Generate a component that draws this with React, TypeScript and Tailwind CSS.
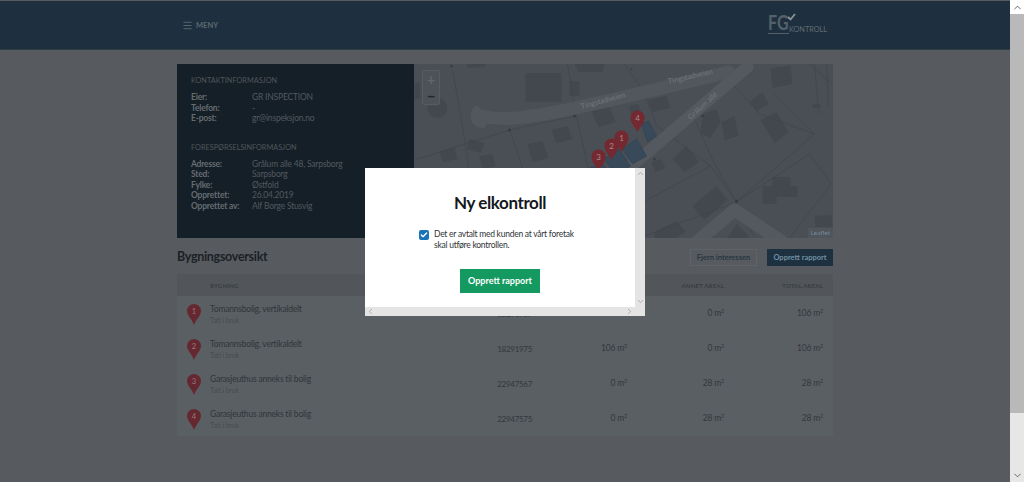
import { Check, ChevronDown, ChevronLeft, ChevronRight, ChevronUp, Menu } from "lucide-react";
import type { ReactNode } from "react";

const contact = [
  ["Eier:", "GR INSPECTION"],
  ["Telefon:", "-"],
  ["E-post:", "gr@inspeksjon.no"],
];

const request = [
  ["Adresse:", "Grålum alle 48, Sarpsborg"],
  ["Sted:", "Sarpsborg"],
  ["Fylke:", "Østfold"],
  ["Opprettet:", "26.04.2019"],
  ["Opprettet av:", "Alf Borge Stusvig"],
];

const rows = [
  { n: 1, name: "Tomannsbolig, vertikaldelt", id: "18291967", bra: "106", other: "0", total: "106" },
  { n: 2, name: "Tomannsbolig, vertikaldelt", id: "18291975", bra: "106", other: "0", total: "106" },
  { n: 3, name: "Garasjeuthus anneks til bolig", id: "22947567", bra: "0", other: "28", total: "28" },
  { n: 4, name: "Garasjeuthus anneks til bolig", id: "22947575", bra: "0", other: "28", total: "28" },
];

const Pin = ({ n, x, y }: { n: number; x: number; y: number }) => (
  <g transform={`translate(${x} ${y})`}>
    <path d="M0 12C-2 7-7 4-7 -2.500A7 7 0 0 1 7 -2.500C7 4 2 7 0 12Z" fill="#74282f" />
    <text x="0" y="0.500" textAnchor="middle" fontSize="8" fill="#a88a8e">{n}</text>
  </g>
);

const buildings = [
  "M111 9L147 9 147 38 111 38z", "M155 17L165 17 165 32 155 32z", "M55 75L70 79 66 89 52 85z", "M25 87L40 84 43 95 28 98z",
  "M113 80L128 77 134 94 118 98z", "M137 66L153 62 158 75 142 79z", "M177 47L195 43 201 58 184 63z", "M65 92L78 90 81 102 68 105z",
  "M233 36L252 32 256 44 238 48z", "M215 42L224 40 226 49 217 51z", "M288 50L302 45 306 58 296 74 286 70z", "M307 58L320 52 324 72 310 76z",
  "M346 56L362 48 374 68 360 79z", "M335 38L348 28 354 40 342 47z", "M356 4L376 2 378 20 358 24z", "M258 95L272 82 285 98 270 108z",
  "M237 98L246 95 251 104 241 108z", "M278 142L302 122 313 136 290 156z", "M348 122L358 122 358 113 376 113 376 122 383 122 383 133 362 133 362 140 348 140z",
  "M400 152L417 151 418 163 401 163z", "M240 168L262 157 271 168 262 174 240 174z", "M313 174L322 160 334 172 333 174z", "M52 0L72 0 70 3 54 4z",
  "M0 20L5 18 6 34 0 36z", "M160 0L190 0 188 8 164 8z", "M398 40L406 40 406 44 398 44z",
];

const MapView = () => (
  <svg viewBox="0 0 418 174" className="block h-full w-full bg-[#494f55]">
    <circle cx="23" cy="44" r="10" fill="#42484e" />
    <g fill="#42484e">
      {buildings.map((d) => (
        <path key={d} d={d} />
      ))}
    </g>
    <g stroke="#3f454b" strokeWidth="0.700" fill="none">
      <path d="M38 6L48 62 58 130" />
      <path d="M0 96L95 66 160 52" />
      <path d="M95 66L110 110M153 0L162 52 175 110" />
      <path d="M210 0L228 26 242 60" />
      <path d="M240 60L296 102 322 138 340 174" />
      <path d="M280 55L300 100 322 138 400 70 360 30" />
      <path d="M322 138L395 90 417 120M225 140L296 102M225 174L322 138" />
      <path d="M300 0L345 50 400 70M395 0L417 20M400 0L404 50M412 0L414 44" />
      <path d="M375 174L417 120" />
    </g>
    <g fill="#363b41">
      <circle cx="37" cy="2" r="1.200" />
      <circle cx="95" cy="66" r="1.500" />
      <circle cx="160" cy="52" r="1.500" />
      <circle cx="217" cy="5" r="1" />
      <circle cx="288" cy="52" r="1.200" />
      <circle cx="322" cy="137" r="1.500" />
      <circle cx="240" cy="95" r="1.200" />
    </g>
    <g fill="none" strokeLinecap="round" strokeLinejoin="round">
      <path d="M66 52C100 60 140 50 314 8" stroke="#51575c" strokeWidth="13" />
      <path d="M62 46C58 52 60 60 68 60" stroke="#51575c" strokeWidth="8" />
      <path d="M333 3L210 108 150 174" stroke="#53595e" strokeWidth="12" />
      <path d="M282 178L320 146 368 178" stroke="#53595e" strokeWidth="13" strokeLinecap="butt" />
    </g>
    <g fill="#72777b" fontSize="7.500">
      <text transform="translate(167 45) rotate(-15)">Tingstadveien</text>
      <text transform="translate(254 20) rotate(-13)">Tingstadveien</text>
      <text transform="translate(276 56) rotate(-42)">Grålum allé</text>
    </g>
    <g fill="#38495a" stroke="#2d3f50" strokeWidth="0.500">
      <path d="M227 60L234 57 242 72 233 78z" />
      <path d="M208 85L222 75 232 92 218 100z" />
      <path d="M190 95L204 85 216 102 200 110z" />
      <path d="M175 104L188 100 196 110 170 112z" />
    </g>
    <Pin n={3} x={184} y={95} />
    <Pin n={2} x={197} y={84} />
    <Pin n={1} x={207} y={76} />
    <Pin n={4} x={223} y={56} />
  </svg>
);

const InfoRows = ({ items }: { items: string[][] }) => (
  <dl className="text-[8.500px] leading-[10.500px] tracking-[-0.2px]">
    {items.map(([label, value]) => (
      <div key={label} className="flex">
        <dt className="w-[61px] font-bold text-[#666c71]">{label}</dt>
        <dd className="text-[#525960]">{value}</dd>
      </div>
    ))}
  </dl>
);

const Logo = () => (
  <svg viewBox="0 -2 60 28" className="h-[28px] w-[60px]">
    <text transform="translate(0 17) scale(0.76 1)" fontSize="21" fontWeight="700" fill="#566069">FG</text>
    <path d="M0 20.500H21" stroke="#566069" strokeWidth="1" />
    <path d="M20 4L22.500 6.500 27 1" fill="none" stroke="#8b9298" strokeWidth="1.800" />
    <text x="21" y="18.500" fontSize="7" textLength="38" lengthAdjust="spacingAndGlyphs" fill="#616b72">KONTROLL</text>
  </svg>
);

const Grid = ({ children, className }: { children: ReactNode; className: string }) => (
  <div className={`grid grid-cols-[33px_1fr_80px_95px_97px_99px] pr-[10px] ${className}`}>{children}</div>
);

const Area = ({ value }: { value: string }) => (
  <span className="text-right text-[8.500px] tracking-[-0.2px] text-[#33383c]">
    {value} m<sup className="text-[5.500px]">2</sup>
  </span>
);

const RowPin = ({ n }: { n: number }) => (
  <svg viewBox="0 0 14 21" className="ml-[10px] mt-[2px] h-[21px] w-[14px]">
    <path d="M7 21C5 15 0 12 0 6.500A7 6.500 0 0 1 14 6.500C14 12 9 15 7 21Z" fill="#662830" />
    <text x="7" y="9.500" textAnchor="middle" fontSize="7.500" fill="#96787c">{n}</text>
  </svg>
);

export default function App() {
  return (
    <div className="relative flex h-[482px] w-[1024px] overflow-hidden bg-[#575b5f] font-['Lato','Noto_Sans',sans-serif]">
      <div className="flex w-[1010px] flex-col">
        <header className="mt-px flex h-[49px] items-center justify-between border-b border-[#2f3d48] bg-[#1e303f] px-[182px]">
          <div className="mt-px flex items-center gap-[3px] text-[7.500px] font-bold text-[#5d6870]">
            <Menu className="h-[11px] w-[11px]" />
            MENY
          </div>
          <Logo />
        </header>

        <main className="mx-[177px] mt-[14px] w-[656px]">
          <section className="flex h-[174px]">
            <div className="w-[237px] bg-[#151f27] px-[14px] pt-[12px]">
              <h2 className="mb-[6px] text-[7.300px] leading-[10px] text-[#4f565b]">KONTAKTINFORMASJON</h2>
              <InfoRows items={contact} />
              <h2 className="mb-[6px] mt-[19px] text-[7.300px] leading-[10px] text-[#4f565b]">FORESPØRSELSINFORMASJON</h2>
              <InfoRows items={request} />
            </div>
            <div className="relative flex-1 overflow-hidden">
              <MapView />
              <div className="absolute left-[8px] top-[6px] flex h-[35px] w-[18px] flex-col items-center rounded-[2px] border border-[#565c61] bg-[#4c5257] text-[15px] font-bold leading-[17px]">
                <span className="text-[#61666a]">+</span>
                <span className="text-[#22262a]">−</span>
              </div>
              <span className="absolute bottom-0 right-0 bg-[#4f555a] px-[3px] text-[6.500px] leading-[10px] text-[#6f8a9c]">Leaflet</span>
            </div>
          </section>

          <div className="mt-[11px] flex h-[17px] items-center justify-between">
            <h1 className="text-[12.500px] font-bold tracking-[-0.3px] text-[#1c2126]">Bygningsoversikt</h1>
            <div className="flex gap-[10px] text-[7.500px] font-bold">
              <button className="h-[17px] w-[67px] border border-[#5e6367] text-[#283541]">Fjern interessen</button>
              <button className="h-[17px] w-[66px] bg-[#1d3140] text-[#7390a3]">Opprett rapport</button>
            </div>
          </div>

          <div className="mt-[8px] bg-[#5a5f63]">
            <Grid className="h-[22px] items-center bg-[#52565a] text-[6px] font-bold tracking-[0.2px] text-[#393d41]">
              <span />
              <span>BYGNING</span>
              <span />
              <span />
              <span className="text-right">ANNET AREAL</span>
              <span className="text-right">TOTAL AREAL</span>
            </Grid>
            {rows.map((r) => (
              <Grid key={r.n} className="h-[35px] items-center">
                <RowPin n={r.n} />
                <div className="pt-[2px] text-[8.500px] leading-[11px] tracking-[-0.2px]">
                  <div className="text-[#30353a]">{r.name}</div>
                  <div className="text-[7px] text-[#484d51]">Tatt i bruk</div>
                </div>
                <span className="text-right text-[8px] tracking-[-0.3px] text-[#33383c]">{r.id}</span>
                <Area value={r.bra} />
                <Area value={r.other} />
                <Area value={r.total} />
              </Grid>
            ))}
          </div>
        </main>
      </div>

      <div className="flex w-[14px] flex-col bg-[#e7e7e7] text-[#5f5f5f]">
        <div className="flex h-[14px] items-center justify-center bg-white">
          <ChevronUp className="h-[11px] w-[11px]" />
        </div>
        <div className="h-[399px] bg-[#b9b9b9]" />
        <div className="mt-auto flex h-[14px] items-center justify-center">
          <ChevronDown className="h-[11px] w-[11px]" />
        </div>
      </div>

      <div className="absolute left-[365px] top-[168px] flex h-[148px] w-[280px] flex-col bg-white">
        <div className="flex min-h-0 flex-1">
          <div className="flex flex-1 flex-col items-center pt-[24px]">
            <h2 className="text-[17px] font-bold leading-[22px] tracking-[-0.4px] text-[#15191d]">Ny elkontroll</h2>
            <label className="ml-[54px] mt-[15px] flex w-[162px] gap-[5px] self-start text-[8.500px] leading-[11px] tracking-[-0.25px] text-[#2f3437]">
              <span className="mt-px flex h-[10px] w-[10px] shrink-0 items-center justify-center rounded-[2px] bg-[#1a75b8]">
                <Check className="h-[8px] w-[8px] text-white" strokeWidth={4} />
              </span>
              <span className="whitespace-nowrap">
                Det er avtalt med kunden at vårt foretak
                <br />
                skal utføre kontrollen.
              </span>
            </label>
            <button className="mt-[18px] h-[24px] w-[80px] bg-[#149a60] text-[9px] font-bold text-white">Opprett rapport</button>
          </div>
          <div className="flex w-[10px] flex-col items-center justify-between bg-[#e4e4e4] text-[#9a9a9a]">
            <ChevronUp className="mt-[1px] h-[9px] w-[9px]" />
            <ChevronDown className="mb-[1px] h-[9px] w-[9px]" />
          </div>
        </div>
        <div className="flex h-[9px] items-center justify-between bg-[#e4e4e4] px-px text-[#9a9a9a]">
          <ChevronLeft className="h-[9px] w-[9px]" />
          <ChevronRight className="mr-[10px] h-[9px] w-[9px]" />
        </div>
      </div>
    </div>
  );
}
